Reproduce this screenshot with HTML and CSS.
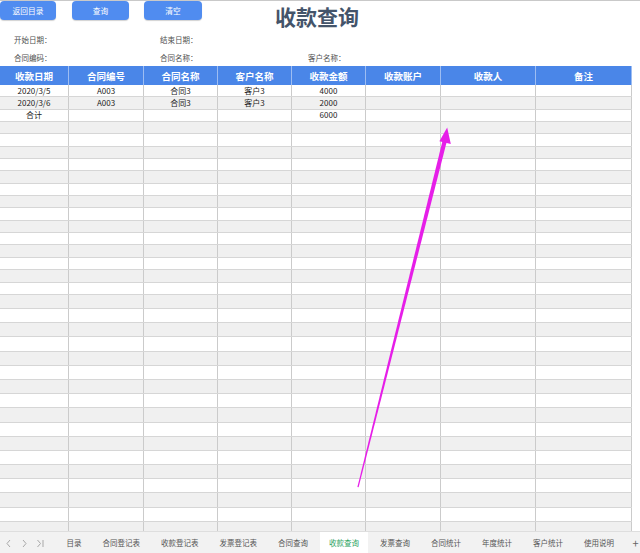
FILE: index.html
```html
<!DOCTYPE html>
<html lang="zh">
<head>
<meta charset="utf-8">
<title>收款查询</title>
<link rel="stylesheet" href="styles.css">
</head>
<body>
<div class="page">
  <div class="top">
    <div class="bar">
      <div class="btn">返回目录</div>
      <div class="btn b2">查询</div>
      <div class="btn b3">清空</div>
      <div class="title">收款查询</div>
    </div>
    <div class="labels">
      <span>开始日期<i class="colon">：</i></span><span>结束日期<i class="colon">：</i></span><span></span>
    </div>
    <div class="labels">
      <span>合同编码<i class="colon">：</i></span><span>合同名称<i class="colon">：</i></span><span>客户名称<i class="colon">：</i></span>
    </div>
  </div>
  <div class="head">
    <span>收款日期</span><span>合同编号</span><span>合同名称</span><span>客户名称</span><span>收款金额</span><span>收款账户</span><span>收款人</span><span>备注</span>
  </div>
  <div class="grid">
    <div class="row"><span>2020/3/5</span><span>A003</span><span>合同3</span><span>客户3</span><span>4000</span><span></span><span></span><span></span></div>
    <div class="row"><span>2020/3/6</span><span>A003</span><span>合同3</span><span>客户3</span><span>2000</span><span></span><span></span><span></span></div>
    <div class="row"><span>合计</span><span></span><span></span><span></span><span>6000</span><span></span><span></span><span></span></div>
    <div class="row"><span></span><span></span><span></span><span></span><span></span><span></span><span></span><span></span></div>
    <div class="row"><span></span><span></span><span></span><span></span><span></span><span></span><span></span><span></span></div>
    <div class="row"><span></span><span></span><span></span><span></span><span></span><span></span><span></span><span></span></div>
    <div class="row"><span></span><span></span><span></span><span></span><span></span><span></span><span></span><span></span></div>
    <div class="row"><span></span><span></span><span></span><span></span><span></span><span></span><span></span><span></span></div>
    <div class="row"><span></span><span></span><span></span><span></span><span></span><span></span><span></span><span></span></div>
    <div class="row"><span></span><span></span><span></span><span></span><span></span><span></span><span></span><span></span></div>
    <div class="row"><span></span><span></span><span></span><span></span><span></span><span></span><span></span><span></span></div>
    <div class="row"><span></span><span></span><span></span><span></span><span></span><span></span><span></span><span></span></div>
    <div class="row"><span></span><span></span><span></span><span></span><span></span><span></span><span></span><span></span></div>
    <div class="row"><span></span><span></span><span></span><span></span><span></span><span></span><span></span><span></span></div>
    <div class="row"><span></span><span></span><span></span><span></span><span></span><span></span><span></span><span></span></div>
    <div class="row"><span></span><span></span><span></span><span></span><span></span><span></span><span></span><span></span></div>
    <div class="row"><span></span><span></span><span></span><span></span><span></span><span></span><span></span><span></span></div>
    <div class="row tall"><span></span><span></span><span></span><span></span><span></span><span></span><span></span><span></span></div>
    <div class="row tall"><span></span><span></span><span></span><span></span><span></span><span></span><span></span><span></span></div>
    <div class="row tall"><span></span><span></span><span></span><span></span><span></span><span></span><span></span><span></span></div>
    <div class="row tall"><span></span><span></span><span></span><span></span><span></span><span></span><span></span><span></span></div>
    <div class="row tall"><span></span><span></span><span></span><span></span><span></span><span></span><span></span><span></span></div>
    <div class="row tall"><span></span><span></span><span></span><span></span><span></span><span></span><span></span><span></span></div>
    <div class="row tall"><span></span><span></span><span></span><span></span><span></span><span></span><span></span><span></span></div>
    <div class="row tall"><span></span><span></span><span></span><span></span><span></span><span></span><span></span><span></span></div>
    <div class="row tall"><span></span><span></span><span></span><span></span><span></span><span></span><span></span><span></span></div>
    <div class="row tall"><span></span><span></span><span></span><span></span><span></span><span></span><span></span><span></span></div>
    <div class="row tall"><span></span><span></span><span></span><span></span><span></span><span></span><span></span><span></span></div>
    <div class="row tall"><span></span><span></span><span></span><span></span><span></span><span></span><span></span><span></span></div>
    <div class="row tall"><span></span><span></span><span></span><span></span><span></span><span></span><span></span><span></span></div>
    <div class="row tall"><span></span><span></span><span></span><span></span><span></span><span></span><span></span><span></span></div>
    <div class="row tall"><span></span><span></span><span></span><span></span><span></span><span></span><span></span><span></span></div>
    <div class="row tall"><span></span><span></span><span></span><span></span><span></span><span></span><span></span><span></span></div>
    <div class="row tall"><span></span><span></span><span></span><span></span><span></span><span></span><span></span><span></span></div>
  </div>
  <div class="tabs">
    <div class="nav">
      <svg width="45" height="22" viewBox="0 0 45 22" aria-hidden="true">
        <path d="M10 8 L7 11.5 L10 15" fill="none" stroke="#a8a8a8" stroke-width="1"/>
        <path d="M23 8 L26 11.5 L23 15" fill="none" stroke="#a8a8a8" stroke-width="1"/>
        <path d="M37.5 8 L40.5 11.5 L37.5 15" fill="none" stroke="#a8a8a8" stroke-width="1"/>
        <path d="M43 8 L43 15" fill="none" stroke="#a8a8a8" stroke-width="1"/>
      </svg>
    </div>
    <div class="tab">目录</div>
    <div class="tab">合同登记表</div>
    <div class="tab">收款登记表</div>
    <div class="tab">发票登记表</div>
    <div class="tab">合同查询</div>
    <div class="tab active">收款查询</div>
    <div class="tab">发票查询</div>
    <div class="tab">合同统计</div>
    <div class="tab">年度统计</div>
    <div class="tab">客户统计</div>
    <div class="tab">使用说明</div>
    <div class="plus">+</div>
  </div>
</div>
<svg class="arrow" width="640" height="553" viewBox="0 0 640 553" aria-hidden="true">
  <polygon points="357.4,487 442.6,140.5 446.8,141.5 358.6,487.3" fill="#e61ee8"/>
  <polygon points="447.2,127.5 439.4,141.2 450.8,143.9" fill="#e61ee8"/>
</svg>
</body>
</html>
```

FILE: styles.css
```css
* {
  box-sizing: border-box;
  margin: 0;
  padding: 0;
}

body {
  width: 640px;
  height: 553px;
  overflow: hidden;
  position: relative;
  background: #ffffff;
  font-family: "Noto Sans CJK SC", "Noto Sans", sans-serif;
  color: #333;
}

.page {
  display: flex;
  flex-direction: column;
  height: 553px;
}

.top {
  flex: none;
  height: 66px;
  border-top: 1px solid #c9c9c9;
}

.bar {
  display: flex;
  align-items: flex-start;
  height: 29px;
}

.btn {
  width: 56px;
  height: 19px;
  border-radius: 4px;
  background: #508cf0;
  color: #fff;
  font-size: 7.7px;
  display: flex;
  align-items: center;
  justify-content: center;
  box-shadow: 0 1px 1px rgba(0, 0, 0, 0.18);
}

.b2 {
  margin-left: 16px;
  width: 57px;
}

.b3 {
  margin-left: 15px;
  width: 58px;
}

.title {
  margin-left: 73px;
  margin-top: 3px;
  font-size: 21px;
  font-weight: 700;
  line-height: 24px;
  color: #44546a;
}

.labels {
  display: grid;
  grid-template-columns: 146px 148px 1fr;
  align-items: center;
  height: 18px;
  padding-left: 14px;
  font-size: 7.5px;
  color: #505050;
}

.colon {
  font-style: normal;
  font-family: "Noto Sans CJK TC", "Noto Sans CJK SC", sans-serif;
}

.head {
  flex: none;
  display: grid;
  grid-template-columns: 69px 75px 74px 74px 74px 75px 95px 96px;
  width: 632px;
  height: 19px;
  background: #4a86e8;
  color: #fff;
  font-size: 9.5px;
  font-weight: 700;
}

.head span {
  display: flex;
  align-items: center;
  justify-content: center;
  border-right: 1px solid #9dbdf2;
}

.grid {
  flex: 1;
  overflow: hidden;
}

.row {
  display: grid;
  grid-template-columns: 69px 75px 74px 74px 74px 75px 95px 96px;
  width: 632px;
  height: 12.35px;
  border-bottom: 1px solid #d6d6d6;
  font-size: 8px;
  color: #222;
}

.row.tall {
  height: 14.2px;
}

.row:nth-child(even) {
  background: #f0f0f0;
}

.row span {
  display: flex;
  align-items: center;
  justify-content: center;
  border-right: 1px solid #cbcbcb;
  line-height: 1;
}

.tabs {
  flex: none;
  display: flex;
  align-items: stretch;
  height: 22px;
  background: #f2f2f2;
  border-top: 1px solid #dedede;
  font-size: 7.5px;
  color: #555;
}

.nav {
  width: 56px;
  display: flex;
  align-items: center;
}

.tab {
  display: flex;
  align-items: center;
  padding: 0 10.5px;
}

.tab.active {
  background: #ffffff;
  color: #2aa35f;
  padding: 0 9px;
  margin: 0 1.5px;
}

.plus {
  display: flex;
  align-items: center;
  margin-left: 8px;
  font-size: 11px;
  color: #666;
}

.arrow {
  position: absolute;
  left: 0;
  top: 0;
  pointer-events: none;
}
```
